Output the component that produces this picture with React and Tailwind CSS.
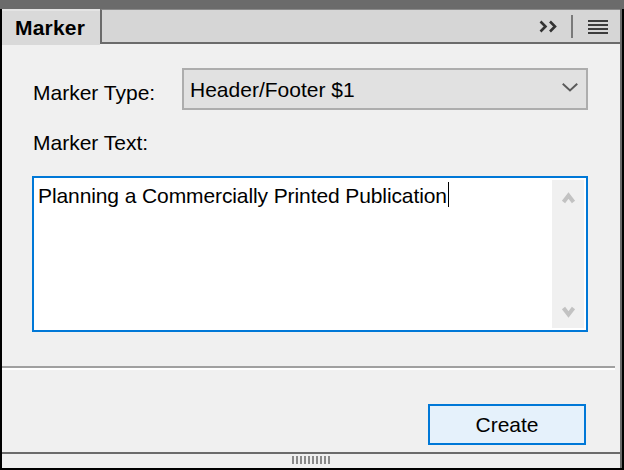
import React from 'react';

const font = "font-['Liberation_Sans',Arial,sans-serif]";

const Chevron = ({ className, points, color = '#5a5a5a', width = 2 }) => (
  <svg className={className} viewBox="0 0 16 10" fill="none">
    <polyline points={points} stroke={color} strokeWidth={width} strokeLinejoin="miter" strokeLinecap="square" />
  </svg>
);

export default function App() {
  return (
    <div className={`w-[624px] h-[470px] bg-black pl-[2px] pr-[2px] pb-[2px] flex flex-col ${font}`}>
      {/* top band */}
      <div className="h-[9px] bg-[#6b6b6b] -ml-[2px] -mr-[2px] shrink-0" />
      <div className="flex-1 flex flex-col border-r-2 border-[#6b6b6b] bg-[#f0f0f0]">
        {/* tab row */}
        <div className="flex items-start h-[36px] shrink-0">
          <div className="w-[98px] h-[36px] bg-[#d9d9d9] border-t-2 border-[#e4e4e4] flex items-center pl-[13px]">
            <span className="text-[21px] leading-[24px] font-bold text-black tracking-[0.2px]">Marker</span>
          </div>
          <div className="flex-1 h-[35px] bg-[#d6d6d6] border-l-2 border-b-2 border-t border-[#6b6b6b] border-t-[#8a8a8a] flex items-center justify-end pr-[12px] pt-[1px]">
            <svg className="w-[18px] h-[13px]" viewBox="0 0 18 13" fill="none">
              <polyline points="1.5,1.5 6.5,6.5 1.5,11.5" stroke="#333" strokeWidth="2.6" />
              <polyline points="11,1.5 16,6.5 11,11.5" stroke="#333" strokeWidth="2.6" />
            </svg>
            <div className="w-[2px] h-[23px] bg-[#7a7a7a] ml-[14px]" />
            <div className="ml-[15px] flex flex-col gap-[2px]">
              <div className="w-[20px] h-[2px] bg-[#3c3c3c]" />
              <div className="w-[20px] h-[2px] bg-[#3c3c3c]" />
              <div className="w-[20px] h-[2px] bg-[#3c3c3c]" />
              <div className="w-[20px] h-[2px] bg-[#3c3c3c]" />
            </div>
          </div>
        </div>

        {/* body */}
        <div className="flex-1 flex flex-col">
          <div className="pl-[30px] pr-[32px] pt-[23px] flex flex-col">
            <div className="flex items-start h-[42px]">
              <div className="w-[150px] pl-[1px] pt-[13px] text-[21px] leading-[24px] text-black">Marker Type:</div>
              <div className="flex-1 h-[42px] border-2 border-[#adadad] bg-[#e1e1e1] flex items-center pl-[6px] pr-[8px] pt-[2px]">
                <span className="flex-1 text-[21px] leading-[24px] text-black">Header/Footer $1</span>
                <Chevron className="w-[16px] h-[10px] -mt-[4px]" points="1.5,1.5 8,7.5 14.5,1.5" />
              </div>
            </div>
            <div className="mt-[21px] pl-[1px] text-[21px] leading-[24px] text-black">Marker Text:</div>
            <div className="mt-[21px] h-[156px] border-2 border-[#0078d7] bg-white flex">
              <div className="flex-1 pl-[4px] pt-[6px] flex items-start">
                <span className="text-[21px] leading-[24px] text-black tracking-[-0.1px]">Planning a Commercially Printed Publication</span>
                <span className="w-[1px] h-[25px] bg-black -mt-[2px] ml-[1px]" />
              </div>
              <div className="w-[32px] my-[2px] mr-[2px] bg-[#f0f0f0] flex flex-col items-center justify-between pt-[12px] pb-[10px]">
                <svg className="w-[15px] h-[12px]" viewBox="0 0 15 12" fill="none">
                  <polyline points="2.5,10 7.5,3.5 12.5,10" stroke="#c2c2c2" strokeWidth="4" />
                </svg>
                <svg className="w-[15px] h-[12px]" viewBox="0 0 15 12" fill="none">
                  <polyline points="2.5,2 7.5,8.5 12.5,2" stroke="#c2c2c2" strokeWidth="4" />
                </svg>
              </div>
            </div>
          </div>

          {/* separator */}
          <div className="mt-[34px] mr-[5px] border-t-2 border-[#a0a0a0] border-b-2 border-b-white" />

          <div className="mt-[34px] flex justify-end pr-[34px]">
            <button className="w-[158px] h-[41px] border-2 border-[#0078d7] bg-[#e5f1fb] text-[21px] leading-[24px] text-black flex items-center justify-center">
              Create
            </button>
          </div>
          <div className="flex-1" />
          <div className="h-[2px] bg-[#6b6b6b] shrink-0" />
          <div className="h-[14px] bg-[#f0f0f0] flex justify-center pt-[2px] shrink-0">
            <div className="flex gap-[2px] h-[8px]">
              {Array.from({ length: 10 }).map((_, i) => (
                <div key={i} className="w-[2px] h-[8px] bg-[#8a8a8a]" />
              ))}
            </div>
          </div>
        </div>
      </div>
    </div>
  );
}
